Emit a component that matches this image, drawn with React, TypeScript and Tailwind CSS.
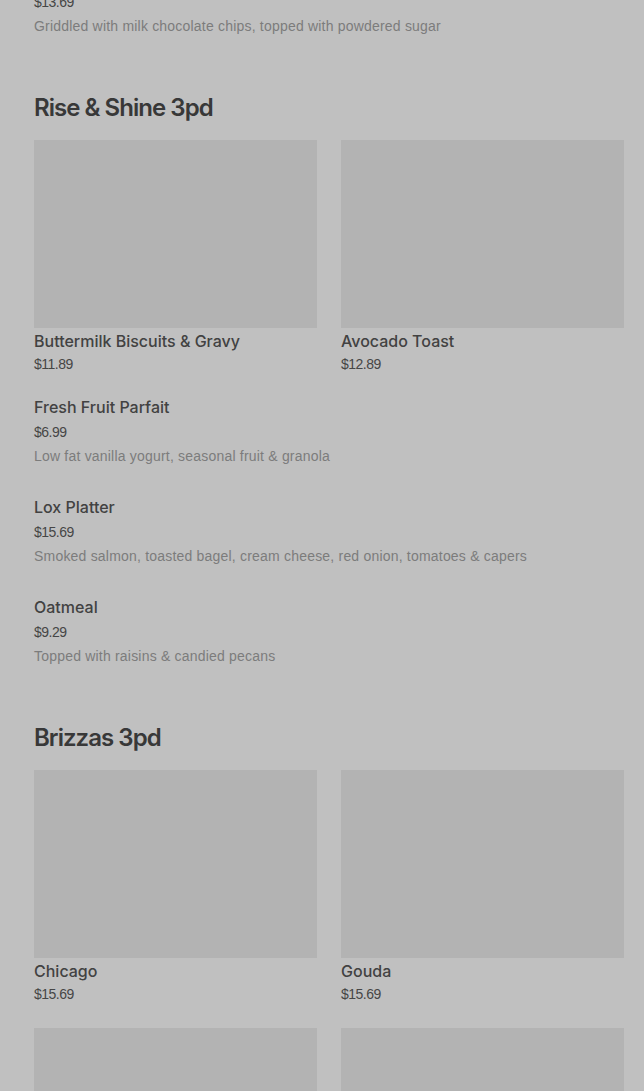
const topItem = {
  name: "Chocolate Chip Pancakes",
  price: "$13.69",
  desc: "Griddled with milk chocolate chips, topped with powdered sugar",
};

const sections = [
  {
    title: "Rise & Shine 3pd",
    featured: [
      { name: "Buttermilk Biscuits & Gravy", price: "$11.89" },
      { name: "Avocado Toast", price: "$12.89" },
    ],
    items: [
      { name: "Fresh Fruit Parfait", price: "$6.99", desc: "Low fat vanilla yogurt, seasonal fruit & granola" },
      { name: "Lox Platter", price: "$15.69", desc: "Smoked salmon, toasted bagel, cream cheese, red onion, tomatoes & capers" },
      { name: "Oatmeal", price: "$9.29", desc: "Topped with raisins & candied pecans" },
    ],
  },
  {
    title: "Brizzas 3pd",
    featured: [
      { name: "Chicago", price: "$15.69" },
      { name: "Gouda", price: "$15.69" },
      { name: "Margherita", price: "$14.69" },
      { name: "Pepperoni", price: "$15.69" },
    ],
    items: [],
  },
];

const font = "font-['Inter','Liberation_Sans',sans-serif]";

function ListItem({ name, price, desc }: { name: string; price: string; desc: string }) {
  return (
    <li className="pb-[29px]">
      <div className={`text-[16px] leading-6 font-medium text-[#424242] ${font}`}>{name}</div>
      <div className="mt-[3px] text-[14px] leading-5 tracking-[-0.5px] text-[#464646]">{price}</div>
      <p className="mt-1 text-[14px] leading-5 tracking-[0.2px] text-[#7c7c7c]">{desc}</p>
    </li>
  );
}

function Card({ name, price }: { name: string; price: string }) {
  return (
    <li>
      <div className="h-[188px] w-full bg-[#b3b3b3]" />
      <div className={`mt-px text-[16px] leading-6 font-medium text-[#424242] ${font}`}>{name}</div>
      <div className="mt-px text-[14px] leading-5 tracking-[-0.5px] text-[#464646]">{price}</div>
    </li>
  );
}

export default function App() {
  return (
    <div className="h-[1091px] overflow-hidden bg-[#c0c0c0] font-['Liberation_Sans',sans-serif]">
      <div className="-mt-[35px] pl-[34px] pr-[20px]">
        <ul>
          <ListItem {...topItem} />
        </ul>
        {sections.map((s) => (
          <section key={s.title} className="pt-[27px]">
            <h2 className={`text-[24px] leading-8 font-semibold tracking-[-0.04em] text-[#383838] ${font}`}>
              {s.title}
            </h2>
            <ul className="mt-4 grid grid-cols-2 gap-x-6 gap-y-6">
              {s.featured.map((f) => (
                <Card key={f.name} {...f} />
              ))}
            </ul>
            {s.items.length > 0 && (
              <ul className="mt-[21px]">
                {s.items.map((it) => (
                  <ListItem key={it.name} {...it} />
                ))}
              </ul>
            )}
          </section>
        ))}
      </div>
    </div>
  );
}
